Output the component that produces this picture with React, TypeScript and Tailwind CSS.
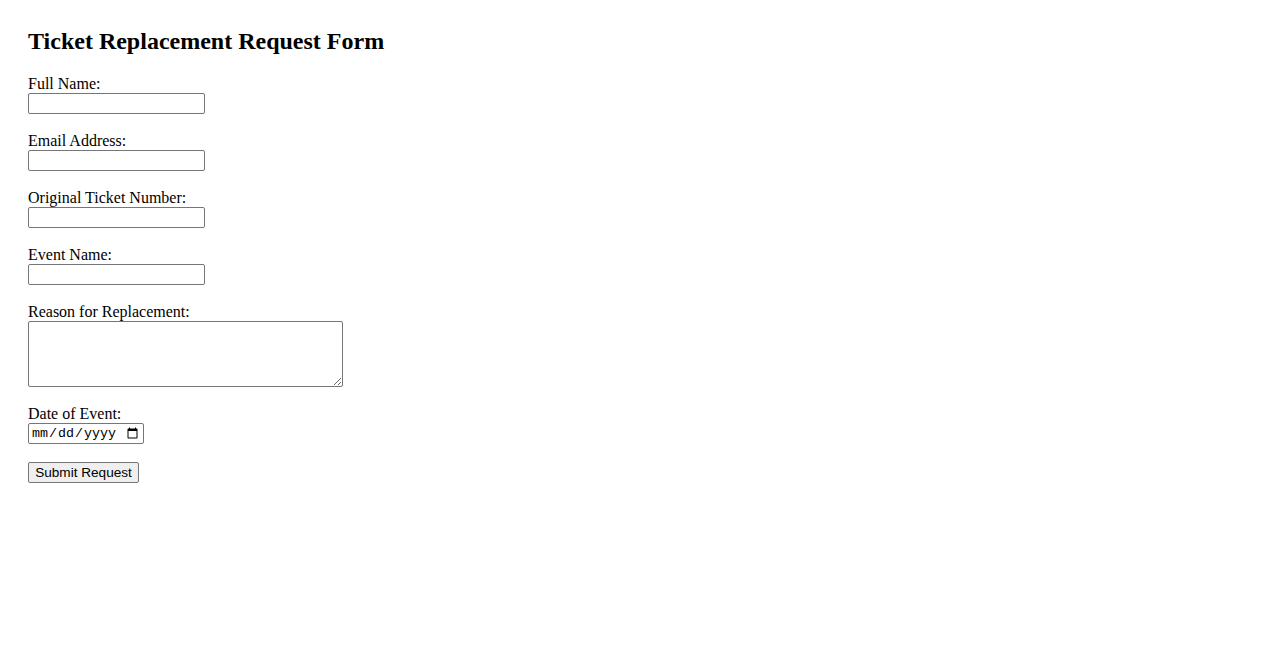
import React from 'react';

const Field = ({ label, children }: { label: string; children: React.ReactNode }) => {
  return (
    <label className="flex flex-col items-start">
      <span className="leading-[18px] h-[18px]">{label}</span>
      {children}
    </label>
  );
};

const inputClass =
  "w-[177px] h-[21px] border border-[#767676] rounded-[2px] bg-white px-[2px] text-[13.33px] font-['Liberation_Sans',Arial,sans-serif] outline-none";

const App = () => {
  return (
    <div className="min-h-[650px] bg-white px-[28px] pt-[28px] text-black text-[16px] font-['Liberation_Serif','Times_New_Roman',serif]">
      <h2 className="text-[24px] font-bold leading-[27px] mb-[20px]">Ticket Replacement Request Form</h2>
      <form className="flex flex-col items-start" onSubmit={(e) => e.preventDefault()}>
        <div className="mb-[18px]">
          <Field label="Full Name:">
            <input className={inputClass} type="text" />
          </Field>
        </div>
        <div className="mb-[18px]">
          <Field label="Email Address:">
            <input className={inputClass} type="email" />
          </Field>
        </div>
        <div className="mb-[18px]">
          <Field label="Original Ticket Number:">
            <input className={inputClass} type="text" />
          </Field>
        </div>
        <div className="mb-[18px]">
          <Field label="Event Name:">
            <input className={inputClass} type="text" />
          </Field>
        </div>
        <div className="mb-[18px]">
          <Field label="Reason for Replacement:">
            <textarea className="w-[315px] h-[66px] border border-[#767676] rounded-[2px] bg-white p-[2px] text-[13.33px] font-['Liberation_Mono',monospace] outline-none" />
          </Field>
        </div>
        <div className="mb-[18px]">
          <Field label="Date of Event:">
            <input
              className="w-[116px] h-[21px] border border-[#767676] rounded-[2px] bg-white px-[2px] text-[13.33px] font-['Liberation_Mono',monospace] outline-none"
              type="date"
            />
          </Field>
        </div>
        <button
          type="submit"
          className="w-[111px] h-[21px] border border-[#767676] rounded-[2px] bg-[#efefef] text-center text-[13.6px] leading-[17px] font-['Liberation_Sans',Arial,sans-serif]"
        >
          Submit Request
        </button>
      </form>
    </div>
  );
};

export default App;
